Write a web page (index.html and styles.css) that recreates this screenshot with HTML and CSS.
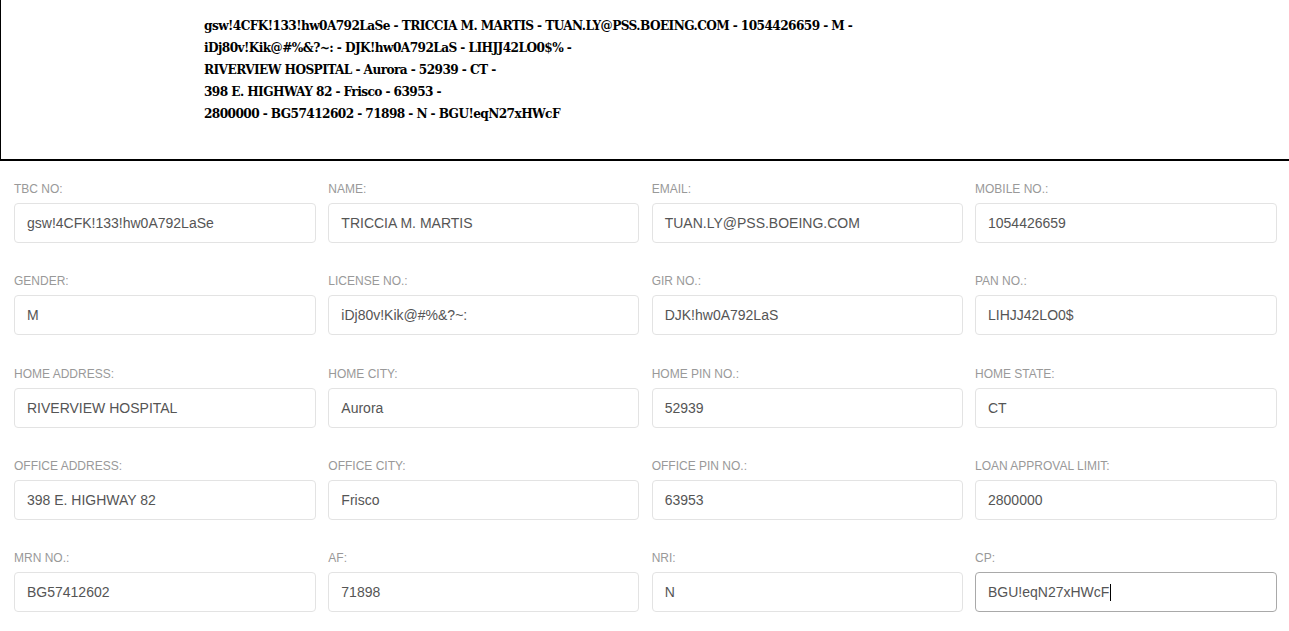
FILE: index.html
```html
<!DOCTYPE html>
<html>
<head>
<meta charset="utf-8">
<link rel="stylesheet" href="styles.css">
</head>
<body>
<div class="preview">
  <div class="preview-text">
    <div>gsw!4CFK!133!hw0A792LaSe - TRICCIA M. MARTIS - TUAN.LY@PSS.BOEING.COM - 1054426659 - M -</div>
    <div>iDj80v!Kik@#%&amp;?~: - DJK!hw0A792LaS - LIHJJ42LO0$% -</div>
    <div>RIVERVIEW HOSPITAL - Aurora - 52939 - CT -</div>
    <div>398 E. HIGHWAY 82 - Frisco - 63953 -</div>
    <div>2800000 - BG57412602 - 71898 - N - BGU!eqN27xHWcF</div>
  </div>
</div>
<div class="form">
  <div class="field"><div class="label">TBC NO:</div><div class="input">gsw!4CFK!133!hw0A792LaSe</div></div>
  <div class="field"><div class="label">NAME:</div><div class="input">TRICCIA M. MARTIS</div></div>
  <div class="field"><div class="label">EMAIL:</div><div class="input">TUAN.LY@PSS.BOEING.COM</div></div>
  <div class="field"><div class="label">MOBILE NO.:</div><div class="input">1054426659</div></div>

  <div class="field"><div class="label">GENDER:</div><div class="input">M</div></div>
  <div class="field"><div class="label">LICENSE NO.:</div><div class="input">iDj80v!Kik@#%&amp;?~:</div></div>
  <div class="field"><div class="label">GIR NO.:</div><div class="input">DJK!hw0A792LaS</div></div>
  <div class="field"><div class="label">PAN NO.:</div><div class="input">LIHJJ42LO0$</div></div>

  <div class="field"><div class="label">HOME ADDRESS:</div><div class="input">RIVERVIEW HOSPITAL</div></div>
  <div class="field"><div class="label">HOME CITY:</div><div class="input">Aurora</div></div>
  <div class="field"><div class="label">HOME PIN NO.:</div><div class="input">52939</div></div>
  <div class="field"><div class="label">HOME STATE:</div><div class="input">CT</div></div>

  <div class="field"><div class="label">OFFICE ADDRESS:</div><div class="input">398 E. HIGHWAY 82</div></div>
  <div class="field"><div class="label">OFFICE CITY:</div><div class="input">Frisco</div></div>
  <div class="field"><div class="label">OFFICE PIN NO.:</div><div class="input">63953</div></div>
  <div class="field"><div class="label">LOAN APPROVAL LIMIT:</div><div class="input">2800000</div></div>

  <div class="field"><div class="label">MRN NO.:</div><div class="input">BG57412602</div></div>
  <div class="field"><div class="label">AF:</div><div class="input">71898</div></div>
  <div class="field"><div class="label">NRI:</div><div class="input">N</div></div>
  <div class="field"><div class="label">CP:</div><div class="input focused">BGU!eqN27xHWcF<span class="caret"></span></div></div>
</div>
</body>
</html>
```
FILE: styles.css
```css
html, body {
  margin: 0;
  padding: 0;
  background: #fff;
}
body {
  width: 1289px;
  overflow: hidden;
}
.preview {
  box-sizing: border-box;
  height: 161px;
  border-left: 1px solid #000;
  border-bottom: 2px solid #000;
  padding: 14px 0 0 203px;
}
.preview-text {
  font-family: "DejaVu Serif Condensed", "DejaVu Serif", serif;
  font-stretch: condensed;
  font-weight: bold;
  font-size: 13.5px;
  letter-spacing: -0.58px;
  line-height: 22px;
  color: #000;
}
.form {
  display: grid;
  grid-template-columns: 302px 311px 311px 302px;
  column-gap: 12.33px;
  row-gap: 31.3px;
  padding: 21px 0 0 14px;
}
.field {
  display: flex;
  flex-direction: column;
}
.label {
  font-family: "Liberation Sans", Arial, sans-serif;
  font-size: 12px;
  line-height: 14px;
  color: #999;
  height: 14px;
  margin-bottom: 7px;
}
.input {
  box-sizing: border-box;
  height: 40px;
  border: 1px solid #e3e3e3;
  border-radius: 4px;
  padding: 0 12px;
  display: flex;
  align-items: center;
  font-family: "Liberation Sans", Arial, sans-serif;
  font-size: 14px;
  color: #555;
}
.input.focused {
  border-color: #a9a9a9;
}
.caret {
  display: inline-block;
  width: 1px;
  height: 17px;
  background: #000;
  margin-left: 1px;
}
```
